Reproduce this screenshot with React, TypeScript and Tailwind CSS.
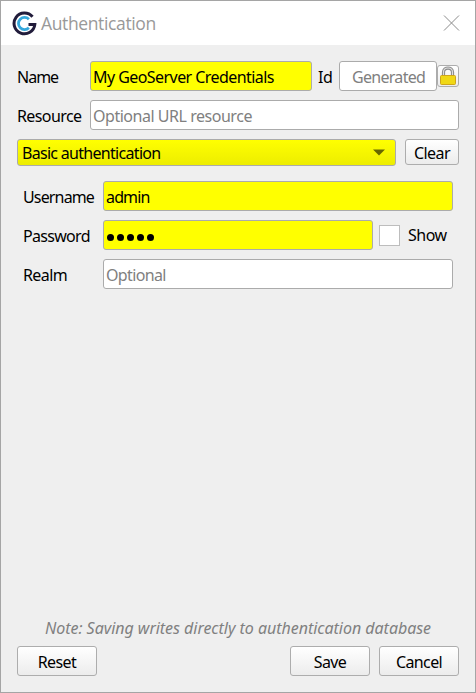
import type { ReactNode } from "react";

function Label({ children, className = "" }: { children: ReactNode; className?: string }) {
  return <span className={`shrink-0 whitespace-nowrap pt-0.5 ${className}`}>{children}</span>;
}

function Field({ children, className = "" }: { children: ReactNode; className?: string }) {
  return (
    <div className={`flex h-[30px] shrink-0 items-center whitespace-nowrap rounded-[3px] border border-[#ababab] pl-0.5 pt-0.5 ${className}`}>
      {children}
    </div>
  );
}

function Button({ children, className = "" }: { children: ReactNode; className?: string }) {
  return (
    <button className={`flex shrink-0 items-center justify-center rounded-[3px] border border-[#adadad] bg-linear-to-b from-white to-[#ececec] ${className}`}>
      {children}
    </button>
  );
}

function Logo() {
  return (
    <svg width="25" height="25" viewBox="0 0 25 25" fill="none" className="shrink-0">
      <path d="M20.5 5.8A10.4 10.4 0 1 0 22.8 13.6H16.5" stroke="#211c3b" strokeWidth="3" />
      <path d="M16.9 8.2A6.1 6.1 0 1 0 16.9 16.8" stroke="#35a8dc" strokeWidth="2.8" />
    </svg>
  );
}

function Lock() {
  return (
    <svg width="18" height="20" viewBox="0 0 18 20" fill="none">
      <path d="M4.5 10V6.3C4.5 .6 13.5 .6 13.5 6.3V10" stroke="#8c8c8c" strokeWidth="3.2" />
      <path d="M4.5 10V6.3C4.5 .6 13.5 .6 13.5 6.3V10" stroke="#e0e0e0" strokeWidth="1.1" />
      <rect x="1.5" y="9.5" width="15" height="9" rx="1" fill="#f0d815" stroke="#cfa51b" />
    </svg>
  );
}

export default function App() {
  return (
    <div className="flex h-[693px] w-[476px] flex-col border border-[#a5a5a5] bg-[#efefef] font-['Noto_Sans',sans-serif] text-[16px] leading-5 tracking-[-0.6px] text-black">
      <header className="flex h-11 shrink-0 items-center bg-white pl-[11px] pr-[15px]">
        <Logo />
        <span className="ml-1 font-['Open_Sans',sans-serif] text-[17.5px] tracking-[-0.37px] text-[#999]">Authentication</span>
        <svg className="ml-auto" width="17" height="17" viewBox="0 0 17 17" stroke="#8b8b8b" strokeWidth="1">
          <path d="M1 .5L16 15.5M16 .5L1 15.5" />
        </svg>
      </header>

      <main className="flex grow flex-col px-4 pt-4">
        <div className="flex h-[30px] items-center">
          <Label className="w-[73px] tracking-[-1px]">Name</Label>
          <Field className="w-[222px] bg-[#ffff00] tracking-[-0.56px]">My GeoServer Credentials</Field>
          <Label className="ml-1.5 w-[21px] tracking-[-0.3px]">Id</Label>
          <Field className="w-[98px] bg-white pl-3 tracking-[-0.7px] text-[#808080]">Generated</Field>
          <Button className="h-[22px] w-[22px]"><Lock /></Button>
        </div>
        <div className="mt-[9px] flex items-center">
          <Label className="w-[73px]">Resource</Label>
          <Field className="w-[369px] bg-white tracking-[-0.47px] text-[#808080]">Optional URL resource</Field>
        </div>
        <div className="mt-[9px] flex h-[27px] items-start gap-[9px]">
          <div className="flex h-[27px] w-[379px] items-center justify-between rounded-[3px] border border-[#ababab] bg-linear-to-b from-[#ffff00] to-[#eded00] pl-1 pr-2.5">
            <span className="tracking-[-0.7px]">Basic authentication</span>
            <svg width="12" height="7" viewBox="0 0 12 7"><path d="M0 .5H12L6 6.5Z" fill="#666600" /></svg>
          </div>
          <Button className="h-[26px] w-[54px] pt-0.5">Clear</Button>
        </div>

        <section className="mt-[15px] flex flex-col gap-[9px] pl-1.5">
          <div className="flex items-center">
            <Label className="w-20 tracking-[-0.85px]">Username</Label>
            <Field className="w-[350px] bg-[#ffff00] tracking-[-0.85px]">admin</Field>
          </div>
          <div className="flex items-center">
            <Label className="w-20 tracking-[-0.7px]">Password</Label>
            <Field className="w-[270px] gap-[3px] bg-[#ffff00] pl-[3px]">
              {[0, 1, 2, 3, 4].map((i) => (
                <span key={i} className="mt-0.5 size-[7px] rounded-full bg-black" />
              ))}
            </Field>
            <span className="ml-1.5 size-[21px] shrink-0 border border-[#bdbdbd] bg-white" />
            <Label className="mb-0.5 ml-2 tracking-[-0.5px]">Show</Label>
          </div>
          <div className="flex items-center">
            <Label className="w-20 tracking-[-0.6px]">Realm</Label>
            <Field className="w-[350px] bg-white tracking-[-0.65px] text-[#808080]">Optional</Field>
          </div>
        </section>

        <footer className="mb-4 mt-auto">
          <p className="mb-2 whitespace-nowrap text-center italic tracking-[-0.03px] text-[#808080]">Note: Saving writes directly to authentication database</p>
          <div className="flex gap-[9px]">
            <Button className="mr-auto h-[30px] w-20 pt-0.5">Reset</Button>
            <Button className="h-[30px] w-20 pt-0.5">Save</Button>
            <Button className="h-[30px] w-20 pt-0.5">Cancel</Button>
          </div>
        </footer>
      </main>
    </div>
  );
}
